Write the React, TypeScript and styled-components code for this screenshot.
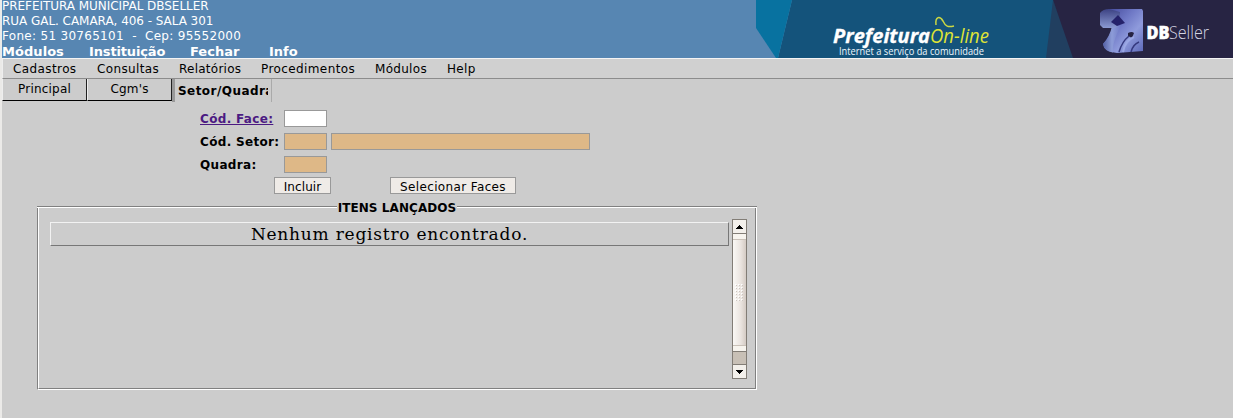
import React from 'react';
import styled, { createGlobalStyle } from 'styled-components';

const Global = createGlobalStyle`
  * { box-sizing: border-box; }
  body { margin: 0; background: #cccccc; overflow: hidden; }
`;

const Page = styled.div`
  width: 1233px;
  height: 418px;
  border-left: 2px solid #ebeae8;
  background: #cccccc;
  font: 12px/15px "DejaVu Sans", sans-serif;
  color: #000;
  overflow: hidden;
`;

const Header = styled.header`
  display: flex;
  justify-content: space-between;
  height: 59px;
  background: #5786b2;
  border-bottom: 1px solid #f4f4f4;
  color: #fff;
`;

const Info = styled.div`
  margin-top: -1px;
  white-space: pre;
`;

const Line = styled.div<{ $spacing?: number }>`
  height: 15px;
  letter-spacing: ${(p) => p.$spacing ?? 0}px;
`;

const TopMenu = styled.nav`
  display: flex;
  font-weight: bold;
  font-size: 13px;
  line-height: 15px;
`;

const TopItem = styled.span<{ $w: number; $spacing: number }>`
  width: ${(p) => p.$w}px;
  letter-spacing: ${(p) => p.$spacing}px;
`;

const Banner = styled.svg`
  display: block;
  width: 477px;
  height: 58px;
`;

const MenuBar = styled.nav`
  display: flex;
  height: 20px;
  padding-left: 10px;
  line-height: 20px;
  background: #d0d0d0;
  border-bottom: 1px solid #8c8c8c;
  border-left: 1px solid #eee;
`;

const MenuItem = styled.span<{ $w: number; $spacing: number }>`
  width: ${(p) => p.$w}px;
  letter-spacing: ${(p) => p.$spacing}px;
  white-space: nowrap;
`;

const Tabs = styled.div`
  display: flex;
  height: 23px;
`;

const Tab = styled.div<{ $active?: boolean }>`
  width: ${(p) => (p.$active ? 100 : 85)}px;
  height: ${(p) => (p.$active ? 23 : 22)}px;
  padding: ${(p) => (p.$active ? '0 3px' : '0')};
  line-height: ${(p) => (p.$active ? 24 : 20)}px;
  text-align: ${(p) => (p.$active ? 'left' : 'center')};
  font-weight: ${(p) => (p.$active ? 'bold' : 'normal')};
  letter-spacing: ${(p) => (p.$active ? 0.45 : 0.2)}px;
  border-style: solid;
  border-width: ${(p) => (p.$active ? '0 1px 0 3px' : '0 1px 1px 1px')};
  border-color: ${(p) => (p.$active ? '#aaa #aaa #aaa #999' : '#ddd #222 #000 #eee')};
`;

const TabText = styled.div`
  overflow: hidden;
  white-space: nowrap;
`;

const Form = styled.form`
  display: flex;
  flex-direction: column;
  gap: 5px;
  padding: 8px 0 0 198px;
`;

const Row = styled.div`
  display: flex;
  align-items: flex-start;
  gap: 4px;
  height: 18px;
`;

const Label = styled.label<{ $link?: boolean }>`
  width: 80px;
  font-weight: bold;
  line-height: 18px;
  letter-spacing: 0.33px;
  white-space: nowrap;
  color: ${(p) => (p.$link ? '#4b1a82' : '#000')};
  text-decoration: ${(p) => (p.$link ? 'underline' : 'none')};
`;

const Field = styled.input<{ $w: number; $locked?: boolean }>`
  width: ${(p) => p.$w}px;
  height: 17px;
  padding: 0 2px;
  border: 1px solid #999;
  border-radius: 0;
  outline: none;
  background: ${(p) => (p.$locked ? '#deb887' : '#fff')};
`;

const Actions = styled.div`
  display: flex;
  gap: 59px;
  padding: 3px 0 0 272px;
`;

const Button = styled.button<{ $w: number; $spacing: number }>`
  width: ${(p) => p.$w}px;
  height: 17px;
  padding: 2px 0 0;
  border: 1px solid #999;
  background: #efebe7;
  font: 12px/14px "DejaVu Sans", sans-serif;
  letter-spacing: ${(p) => p.$spacing}px;
  color: #000;
  white-space: nowrap;
`;

const Group = styled.section`
  width: 720px;
  margin: 7px 0 0 35px;
`;

const GroupHead = styled.header`
  display: flex;
  height: 15px;
`;

const Rule = styled.div`
  flex: 1;
  height: 2px;
  margin-top: 5px;
  background: linear-gradient(#808080 50%, #fff 50%);
`;

const Legend = styled.h2`
  margin: 0;
  padding: 0 1px;
  font-size: 12px;
  font-weight: bold;
  line-height: 15px;
  letter-spacing: 0.08px;
`;

const GroupFrame = styled.div`
  height: 184px;
  margin-top: -10px;
  border: 1px solid;
  border-color: transparent #fff #fff #808080;
  border-top: 0;
`;

const GroupBody = styled.div`
  display: flex;
  gap: 3px;
  height: 183px;
  padding: 13px 0 0 11px;
  border: 1px solid;
  border-color: transparent #808080 #808080 #fff;
  border-top: 0;
`;

const Empty = styled.div`
  width: 679px;
  height: 24px;
  margin-top: 3px;
  border: 1px solid;
  border-color: #f2f2f2 #777 #777 #f2f2f2;
  font: 17px/23px "DejaVu Serif", serif;
  letter-spacing: 0.78px;
  text-align: center;
`;

const ScrollBar = styled.div`
  display: flex;
  flex-direction: column;
  width: 15px;
  height: 160px;
  border: 1px solid #827d76;
  background: #c8c0b6;
`;

const Arrow = styled.div<{ $down?: boolean }>`
  display: flex;
  align-items: center;
  justify-content: center;
  height: 14px;
  background: #f3f0eb;
  border-top: ${(p) => (p.$down ? '1px solid #827d76' : '0')};
  border-bottom: ${(p) => (p.$down ? '0' : '1px solid #827d76')};
`;

const Thumb = styled.div`
  display: flex;
  align-items: center;
  justify-content: center;
  height: 118px;
  border-bottom: 1px solid #827d76;
  background: linear-gradient(90deg, #faf8f5, #eae4df 60%, #d4cbc4);
  box-shadow: inset 0 5px #f7f4ee, inset 0 6px #c9c1b8, inset 0 -5px #f7f4ee, inset 0 -6px #c9c1b8;
`;

const Track = styled.div`
  flex: 1;
`;

const ArrowIcon = ({ down }: { down?: boolean }) => (
  <svg width="7" height="4" viewBox="0 0 7 4" shapeRendering="crispEdges">
    <path d={down ? 'M0 0H7L3.5 4Z' : 'M0 4H7L3.5 0Z'} fill="#000" />
  </svg>
);

const Grip = () => (
  <svg width="9" height="18" viewBox="0 0 9 18">
    {[0, 1, 2, 3, 4, 5].map((r) =>
      [0, 1, 2].map((c) => (
        <g key={`${r}-${c}`}>
          <rect x={c * 3 + 1} y={r * 3 + 1} width="1" height="1" fill="#bbb2aa" />
          <rect x={c * 3} y={r * 3} width="1.5" height="1.5" fill="#fff" />
        </g>
      )),
    )}
  </svg>
);

const BrandBanner = () => (
  <Banner viewBox="756 0 477 58">
    <defs>
      <linearGradient id="face" x1="0" y1="0" x2="1" y2="1">
        <stop offset="0" stopColor="#3d4194" />
        <stop offset=".4" stopColor="#6f79c6" />
        <stop offset=".65" stopColor="#8f9bdc" />
        <stop offset="1" stopColor="#5c68b8" />
      </linearGradient>
      <linearGradient id="side" x1="0" y1="0" x2="1" y2="0">
        <stop offset="0" stopColor="#5360a4" />
        <stop offset=".5" stopColor="#8d9cd8" />
        <stop offset="1" stopColor="#6f7ac6" />
      </linearGradient>
      <linearGradient id="knob" x1="0" y1="0" x2="0" y2="1">
        <stop offset="0" stopColor="#3c4283" />
        <stop offset="1" stopColor="#8b9ad2" />
      </linearGradient>
    </defs>
    <path d="M792 0H1054L1074 58H778Z" fill="#14537b" />
    <path d="M756 0H792L778 58H776L756 28Z" fill="#0872a0" />
    <path d="M1053 0L1046 58H1075Z" fill="#213f60" />
    <path d="M1053 0H1233V58H1073Z" fill="#272443" />
    <text x="833" y="43" textLength="97" lengthAdjust="spacingAndGlyphs" fontFamily="Open Sans, sans-serif" fontSize="19" fontWeight="700" fontStyle="italic" fill="#fff" stroke="#fff" strokeWidth=".3">Prefeitura</text>
    <text x="930" y="43" textLength="59" lengthAdjust="spacingAndGlyphs" fontFamily="Open Sans, sans-serif" fontSize="20.500" fontStyle="italic" fill="#dfe335">On-line</text>
    <path d="M936 25C935 16 940 16 943 21C945.500 26.500 948 27.500 954 26" fill="none" stroke="#cbd743" strokeWidth="1.5" />
    <text x="839" y="54.500" textLength="145" lengthAdjust="spacingAndGlyphs" fontFamily="Open Sans, sans-serif" fontSize="10" fontWeight="500" fill="#eef7fd">Internet a serviço da comunidade</text>
    <path d="M1108 9H1142L1143 11V51L1117 53Q1104 52 1103 44Q1111 36 1113 25L1108 20Z" fill="url(#face)" />
    <path d="M1112 26H1121C1117 33 1112 44 1113 52.500Q1104 51 1103 44Q1110 36 1112 26Z" fill="url(#side)" />
    <path d="M1100 13Q1103 9 1109 9L1120 12V24L1115 28H1103L1100 25Z" fill="url(#knob)" />
    <path d="M1118 15L1125 23L1117 26L1111 22Z" fill="#25226a" />
    <path d="M1128 33Q1132 31 1134 33L1132 38L1128 36Z" fill="#272443" />
    <path d="M1129 36C1124 40 1121 45 1119 52M1139 42C1134 44 1132 48 1131 52" fill="none" stroke="#35397e" strokeWidth="1.500" />
    <path d="M1134 37C1127 40 1124 45 1123 52" fill="none" stroke="#9ba8e4" strokeWidth="2" />
    <text x="1146.500" y="39" textLength="23" lengthAdjust="spacingAndGlyphs" fontFamily="Open Sans, sans-serif" fontSize="17.500" fontWeight="800" fill="#fff" stroke="#fff" strokeWidth=".5">DB</text>
    <text x="1169" y="39" textLength="40" lengthAdjust="spacingAndGlyphs" fontFamily="Open Sans, sans-serif" fontSize="17.500" fontWeight="300" fill="#d4d4e2">Seller</text>
  </Banner>
);

const topMenu: [string, number, number][] = [
  ['Módulos', 87, 0.05], ['Instituição', 101, -0.15], ['Fechar', 79, 0], ['Info', 40, 0],
];
const menu: [string, number, number][] = [
  ['Cadastros', 84, 0.4], ['Consultas', 82, 0.37], ['Relatórios', 82, 0.25],
  ['Procedimentos', 114, 0.4], ['Módulos', 72, 0.3], ['Help', 40, 0.3],
];

export default function App() {
  return (
    <Page>
      <Global />
      <Header>
        <Info>
          <Line $spacing={-0.04}>PREFEITURA MUNICIPAL DBSELLER</Line>
          <Line $spacing={-0.04}>RUA GAL. CAMARA, 406 - SALA 301</Line>
          <Line $spacing={0.3}>Fone: 51 30765101  -  Cep: 95552000</Line>
          <TopMenu>{topMenu.map(([t, w, s]) => <TopItem key={t} $w={w} $spacing={s}>{t}</TopItem>)}</TopMenu>
        </Info>
        <BrandBanner />
      </Header>
      <MenuBar>{menu.map(([t, w, s]) => <MenuItem key={t} $w={w} $spacing={s}>{t}</MenuItem>)}</MenuBar>
      <Tabs>
        <Tab>Principal</Tab>
        <Tab>Cgm's</Tab>
        <Tab $active><TabText>Setor/Quadra</TabText></Tab>
      </Tabs>
      <Form>
        <Row><Label $link>Cód. Face:</Label><Field $w={43} /></Row>
        <Row><Label>Cód. Setor:</Label><Field $w={43} $locked readOnly /><Field $w={259} $locked readOnly /></Row>
        <Row><Label>Quadra:</Label><Field $w={43} $locked readOnly /></Row>
      </Form>
      <Actions>
        <Button $w={57} $spacing={0.1}>Incluir</Button>
        <Button $w={126} $spacing={0.37}>Selecionar Faces</Button>
      </Actions>
      <Group>
        <GroupHead><Rule /><Legend>ITENS LANÇADOS</Legend><Rule /></GroupHead>
        <GroupFrame>
          <GroupBody>
            <Empty>Nenhum registro encontrado.</Empty>
            <ScrollBar>
              <Arrow><ArrowIcon /></Arrow>
              <Thumb><Grip /></Thumb>
              <Track />
              <Arrow $down><ArrowIcon down /></Arrow>
            </ScrollBar>
          </GroupBody>
        </GroupFrame>
      </Group>
    </Page>
  );
}
